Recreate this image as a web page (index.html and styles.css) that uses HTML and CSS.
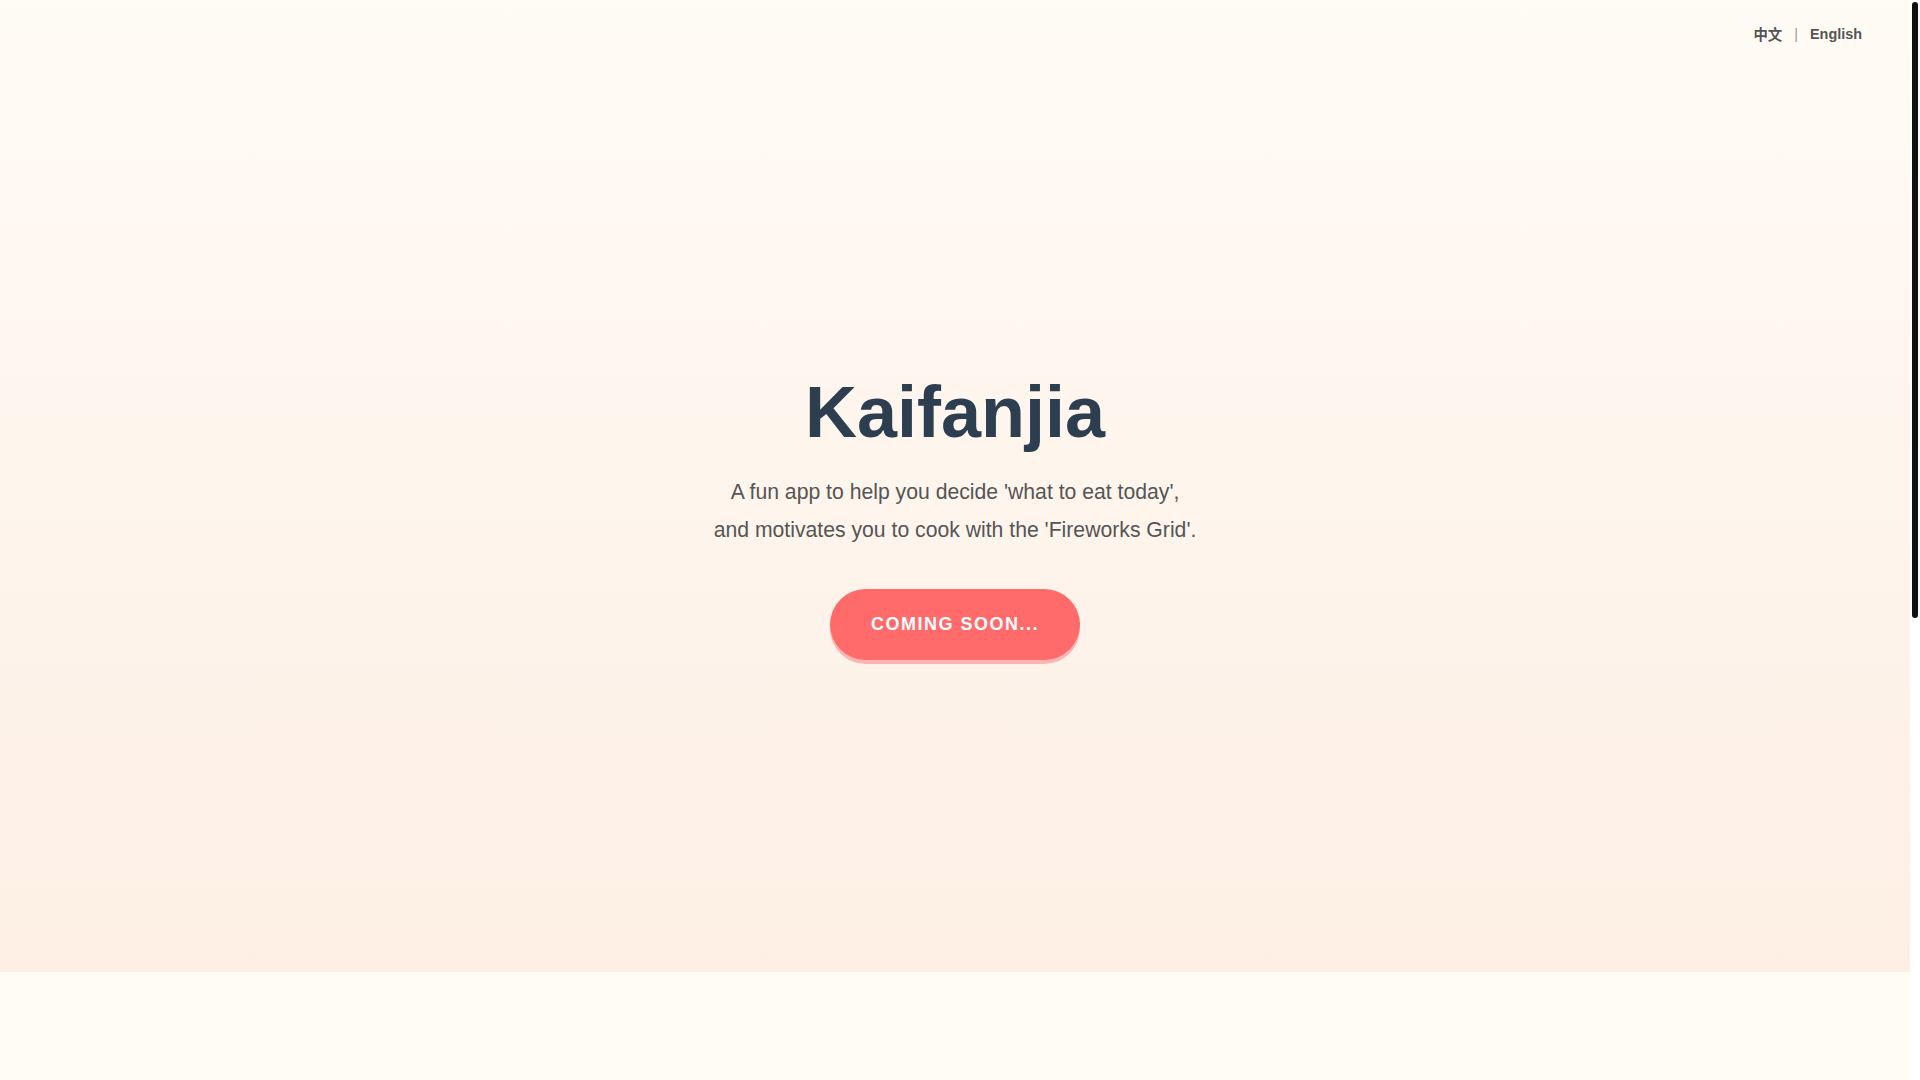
FILE: index.html
```html
<!DOCTYPE html>
<html lang="en">

<head>
  <meta charset="UTF-8">
  <meta name="viewport" content="width=device-width, initial-scale=1.0">
  <title>Kaifanjia</title>
  <link rel="stylesheet" href="styles.css">
</head>

<body>

  <div class="page">
    <section class="hero">
      <div class="top-bar">
        <div class="lang-switch">
          <span class="lang">中文</span>
          <span class="sep">|</span>
          <span class="lang">English</span>
        </div>
      </div>

      <div class="hero-content">
        <h1 class="title">Kaifanjia</h1>
        <p class="subtitle">
          A fun app to help you decide 'what to eat today',<br>
          and motivates you to cook with the 'Fireworks Grid'.
        </p>
        <button class="soon-btn">COMING SOON...</button>
      </div>
    </section>

    <section class="below"></section>
  </div>

  <!-- scrollbar rail -->
  <div class="rail">
    <div class="thumb"></div>
  </div>

</body>

</html>
```

FILE: styles.css
```css
html,
body {
  height: 100%;
  overflow: hidden;
}

body {
  margin: 0;
  display: flex;
  font-family: "Liberation Sans", Arial, "Noto Sans CJK SC", sans-serif;
  background: #fff;
}

.page {
  flex: 1;
  height: 100vh;
  overflow: hidden;
  background: #fffbf5;
}

.rail {
  width: 10px;
  flex-shrink: 0;
  padding: 2px;
  box-sizing: border-box;
  background: #fff;
}

.thumb {
  height: 616px;
  background: #111;
  border-radius: 4px;
}

.hero {
  height: 90vh;
  display: flex;
  flex-direction: column;
  background: linear-gradient(180deg, #fffbf5 0%, #fdefe4 100%);
}

.top-bar {
  display: flex;
  justify-content: flex-end;
  padding: 23px 48px 13px;
}

.lang-switch {
  display: flex;
  align-items: center;
  gap: 12px;
  font-size: 14.4px;
  font-weight: bold;
  color: #555;
}

.sep {
  font-weight: normal;
  color: #999;
}

.hero-content {
  flex: 1;
  display: flex;
  flex-direction: column;
  align-items: center;
  justify-content: center;
  text-align: center;
}

.title {
  margin: 0 0 18px;
  font-size: 72px;
  line-height: 1.2;
  color: #2c3e50;
}

.subtitle {
  margin: 0 0 40px;
  font-size: 21.2px;
  line-height: 1.78;
  color: #555;
}

.soon-btn {
  font-family: inherit;
  font-size: 18px;
  font-weight: bold;
  letter-spacing: 1.5px;
  color: #fff;
  background: #ff6b6b;
  border: none;
  border-radius: 50px;
  padding: 25px 41px;
  box-shadow: 0 4px 0 #ffb3b3;
}

.below {
  height: 920px;
}
```
